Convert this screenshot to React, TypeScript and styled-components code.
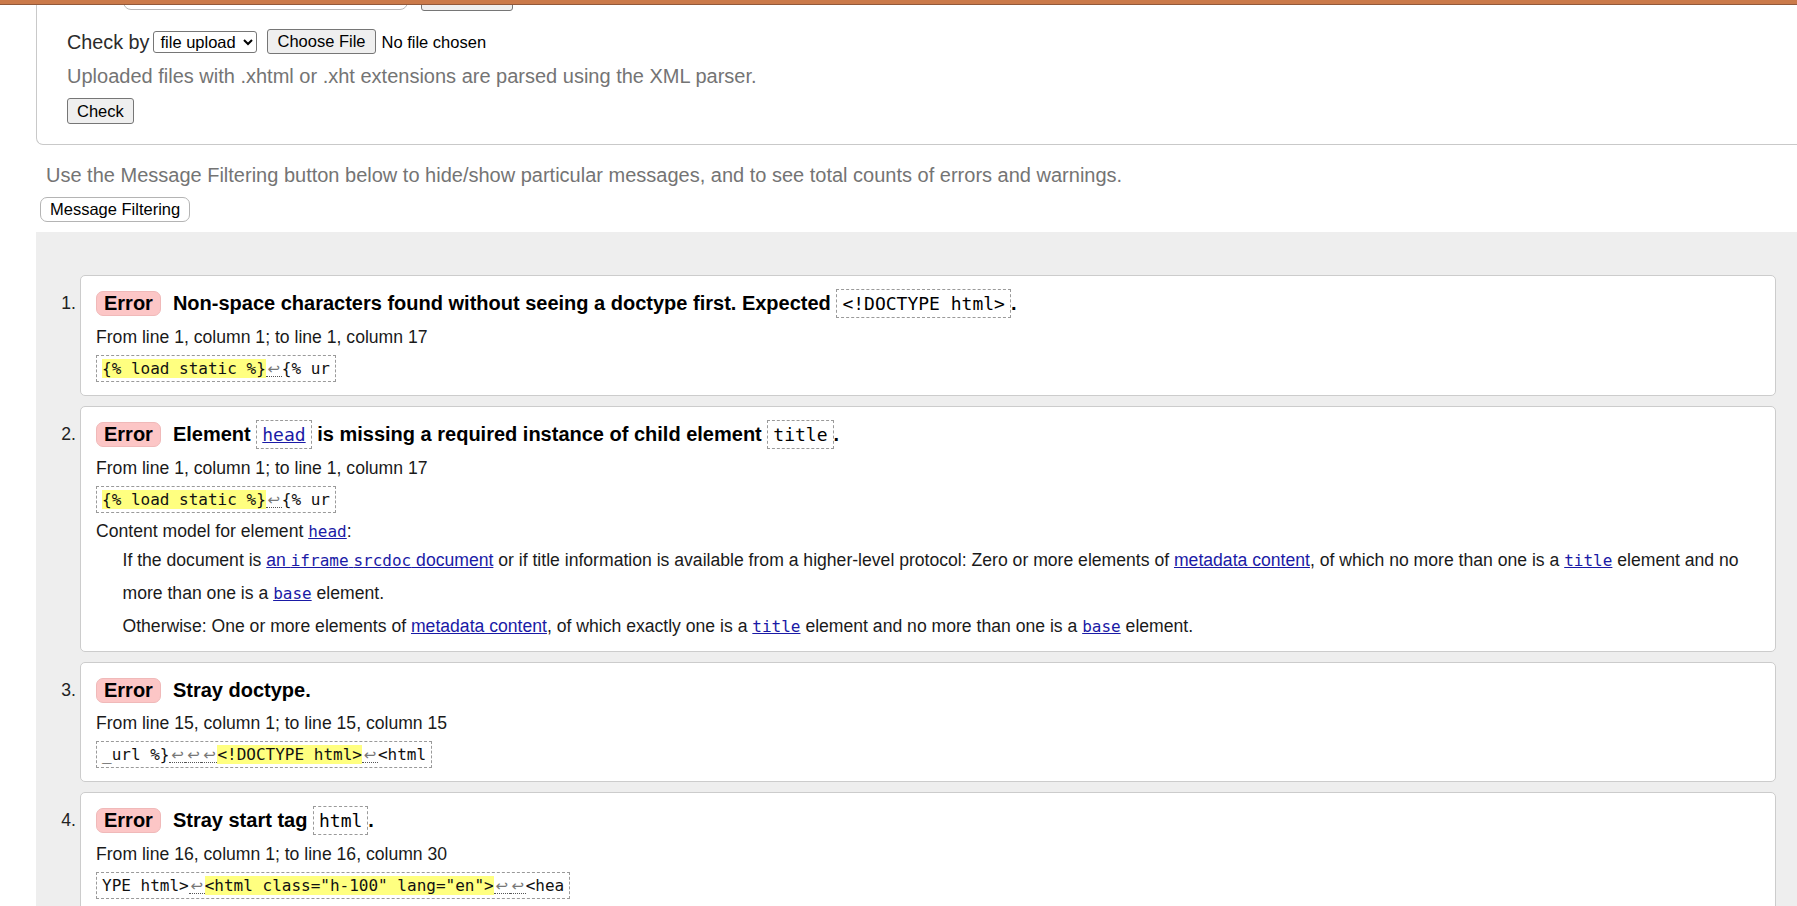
import React from "react";
import styled, { createGlobalStyle } from "styled-components";

const GlobalStyle = createGlobalStyle`
  *, *::before, *::after { box-sizing: border-box; }
  html { overflow: hidden; }
  body {
    margin: 0;
    background: #ffffff;
    color: #000;
    font-family: "Liberation Sans", Arial, sans-serif;
    font-size: 17.6px;
    line-height: 24px;
  }
`;

const Page = styled.div`
  display: flex;
  flex-direction: column;
  align-items: stretch;
`;

const HeaderEdge = styled.div`
  height: 5px;
  background: #cb7a4a;
  border-bottom: 1px solid #93593a;
`;

const InputPanel = styled.section`
  margin-left: 36px;
  border-left: 1px solid #c9c9c9;
  border-bottom: 1px solid #c9c9c9;
  border-bottom-left-radius: 7px;
  padding: 0 0 20px 30px;
  display: flex;
  flex-direction: column;
  align-items: flex-start;
`;

const ClippedRow = styled.div`
  height: 6px;
  overflow: hidden;
  display: flex;
  align-items: flex-end;
  gap: 13px;
  padding-left: 56px;
`;

const AddressField = styled.div`
  flex: none;
  width: 285px;
  height: 34px;
  margin-bottom: 1px;
  border: 1px solid #b9b9b9;
  border-radius: 8px;
`;

const CutButton = styled.div`
  flex: none;
  width: 92px;
  height: 34px;
  border: 1px solid #767676;
  border-radius: 3px;
  background: #efefef;
`;

const CheckByRow = styled.div`
  margin-top: 18px;
  height: 25px;
  display: flex;
  align-items: center;
`;

const CheckByLabel = styled.label`
  font-size: 19.8px;
  color: #2b2b2b;
  margin-right: 4px;
`;

const ModeSelect = styled.select`
  width: 104px;
  height: 22px;
  font-family: "Liberation Sans", Arial, sans-serif;
  font-size: 16.5px;
  color: #000;
  background: #fff;
  border: 1px solid #767676;
  border-radius: 3px;
  padding: 0 0 0 2px;
  margin: 0 10px 0 0;
`;

const FormButton = styled.button<{ $h: number; $top?: number }>`
  height: ${(p) => p.$h}px;
  margin-top: ${(p) => p.$top ?? 0}px;
  padding: 0 9px;
  font-family: "Liberation Sans", Arial, sans-serif;
  font-size: 16.5px;
  line-height: 1;
  color: #000;
  background: #efefef;
  border: 1px solid #767676;
  border-radius: 3px;
`;

const FileStatus = styled.span`
  margin-left: 6px;
  font-size: 16.5px;
  color: #000;
`;

const Hint = styled.p<{ $top: number; $left?: number }>`
  margin: ${(p) => p.$top}px 0 0 ${(p) => p.$left ?? 0}px;
  font-size: 20px;
  line-height: 24px;
  color: #747474;
`;

const FilterButton = styled.button`
  align-self: flex-start;
  margin: 10px 0 0 40px;
  height: 25px;
  padding: 0 9px;
  font-family: "Liberation Sans", Arial, sans-serif;
  font-size: 16.5px;
  line-height: 1;
  color: #000;
  background: #fff;
  border: 1px solid #b4b4b4;
  border-radius: 7px;
`;

const Results = styled.section`
  margin: 10px 0 0 36px;
  background: #eeeeee;
  padding: 43px 21px 40px 0;
`;

const MessageList = styled.ol`
  list-style: none;
  margin: 0;
  padding: 0;
  display: flex;
  flex-direction: column;
  gap: 10px;
`;

const MessageItem = styled.li`
  display: grid;
  grid-template-columns: 44px 1fr;
  align-items: start;
`;

const ItemNumber = styled.span`
  padding: 11px 4px 0 0;
  text-align: right;
  line-height: 34px;
  font-size: 17.6px;
  color: #222;
`;

const MessageCard = styled.div<{ $tail: number }>`
  background: #fff;
  border: 1px solid #cccccc;
  border-radius: 5px;
  padding: 10px 14px ${(p) => p.$tail}px 15px;
  display: flex;
  flex-direction: column;
  align-items: flex-start;
`;

const MessageTitle = styled.p`
  margin: 0;
  font-size: 20px;
  font-weight: bold;
  line-height: 34px;
`;

const SeverityBadge = styled.strong`
  display: inline-block;
  margin-right: 12px;
  padding: 0 7px;
  line-height: 23px;
  background: #fcc6c6;
  border: 1px solid #f0b9b9;
  border-radius: 7px;
`;

const TitleCode = styled.code`
  font-family: "DejaVu Sans Mono", monospace;
  font-size: 18px;
  font-weight: normal;
  padding: 3px 5px;
  border: 1px dashed #9a9a9a;
`;

const Location = styled.p`
  margin: 4px 0 0;
  line-height: 24px;
  color: #1a1a1a;
`;

const ExtractBox = styled.code`
  margin-top: 6px;
  padding: 3px 5px;
  border: 1px dashed #9a9a9a;
  font-family: "DejaVu Sans Mono", monospace;
  font-size: 16px;
  line-height: 19px;
  white-space: pre;
  color: #111;
`;

const Mark = styled.mark`
  background: #ffff80;
  color: inherit;
`;

const LineFeed = styled.span`
  display: inline-block;
  width: 16px;
  height: 15px;
  line-height: 15px;
  text-align: center;
  font-family: "DejaVu Sans", sans-serif;
  font-size: 15px;
  color: #777;
  border-bottom: 1px dotted #555;
`;

const ModelHeading = styled.p`
  margin: 6px 0 0;
  line-height: 24px;
  color: #1a1a1a;
`;

const ModelDetails = styled.div`
  align-self: stretch;
  padding-left: 26.5px;
  color: #1a1a1a;
`;

const ModelPara = styled.p`
  margin: 0;
  line-height: 32px;
`;

const DocLink = styled.a`
  color: #1a1aa6;
  text-decoration: underline;
`;

const InlineCode = styled.code`
  font-family: "DejaVu Sans Mono", monospace;
  font-size: 16px;
`;

type Segment = { kind: "text" | "mark" | "lf"; value?: string };

const t = (value: string): Segment => ({ kind: "text", value });
const m = (value: string): Segment => ({ kind: "mark", value });
const lf: Segment = { kind: "lf" };

const Extract = ({ parts }: { parts: Segment[] }) => (
  <ExtractBox>
    {parts.map((p, i) =>
      p.kind === "mark" ? (
        <Mark key={i}>{p.value}</Mark>
      ) : p.kind === "lf" ? (
        <LineFeed key={i}>↩</LineFeed>
      ) : (
        <React.Fragment key={i}>{p.value}</React.Fragment>
      )
    )}
  </ExtractBox>
);

const Message = ({
  n,
  title,
  location,
  extract,
  tail = 13,
  children,
}: {
  n: number;
  title: React.ReactNode;
  location: string;
  extract: Segment[];
  tail?: number;
  children?: React.ReactNode;
}) => (
  <MessageItem>
    <ItemNumber>{n}.</ItemNumber>
    <MessageCard $tail={tail}>
      <MessageTitle>
        <SeverityBadge>Error</SeverityBadge>
        {title}
      </MessageTitle>
      <Location>{location}</Location>
      <Extract parts={extract} />
      {children}
    </MessageCard>
  </MessageItem>
);

export default function App() {
  return (
    <Page>
      <GlobalStyle />
      <HeaderEdge />
      <InputPanel>
        <ClippedRow>
          <AddressField />
          <CutButton />
        </ClippedRow>
        <CheckByRow>
          <CheckByLabel>Check by</CheckByLabel>
          <ModeSelect defaultValue="file">
            <option value="address">address</option>
            <option value="file">file upload</option>
            <option value="text">text input</option>
          </ModeSelect>
          <FormButton type="button" $h={25}>
            Choose File
          </FormButton>
          <FileStatus>No file chosen</FileStatus>
        </CheckByRow>
        <Hint $top={10}>
          Uploaded files with .xhtml or .xht extensions are parsed using the XML parser.
        </Hint>
        <FormButton type="button" $h={26} $top={10}>
          Check
        </FormButton>
      </InputPanel>
      <Hint $top={18} $left={46}>
        Use the Message Filtering button below to hide/show particular messages, and to see total counts of errors and warnings.
      </Hint>
      <FilterButton type="button">Message Filtering</FilterButton>
      <Results>
        <MessageList>
          <Message
            n={1}
            title={
              <>
                Non-space characters found without seeing a doctype first. Expected{" "}
                <TitleCode>&lt;!DOCTYPE html&gt;</TitleCode>.
              </>
            }
            location="From line 1, column 1; to line 1, column 17"
            extract={[m("{% load static %}"), lf, t("{% ur")]}
          />
          <Message
            n={2}
            tail={8}
            title={
              <>
                Element{" "}
                <TitleCode>
                  <DocLink href="#">head</DocLink>
                </TitleCode>{" "}
                is missing a required instance of child element <TitleCode>title</TitleCode>.
              </>
            }
            location="From line 1, column 1; to line 1, column 17"
            extract={[m("{% load static %}"), lf, t("{% ur")]}
          >
            <ModelHeading>
              Content model for element{" "}
              <DocLink href="#">
                <InlineCode>head</InlineCode>
              </DocLink>
              :
            </ModelHeading>
            <ModelDetails>
              <ModelPara>
                If the document is{" "}
                <DocLink href="#">
                  an <InlineCode>iframe</InlineCode> <InlineCode>srcdoc</InlineCode> document
                </DocLink>{" "}
                or if title information is available from a higher-level protocol: Zero or more elements of{" "}
                <DocLink href="#">metadata content</DocLink>, of which no more than one is a{" "}
                <DocLink href="#">
                  <InlineCode>title</InlineCode>
                </DocLink>{" "}
                element and no more than one is a{" "}
                <DocLink href="#">
                  <InlineCode>base</InlineCode>
                </DocLink>{" "}
                element.
              </ModelPara>
              <ModelPara>
                Otherwise: One or more elements of <DocLink href="#">metadata content</DocLink>, of which exactly
                one is a{" "}
                <DocLink href="#">
                  <InlineCode>title</InlineCode>
                </DocLink>{" "}
                element and no more than one is a{" "}
                <DocLink href="#">
                  <InlineCode>base</InlineCode>
                </DocLink>{" "}
                element.
              </ModelPara>
            </ModelDetails>
          </Message>
          <Message
            n={3}
            title={<>Stray doctype.</>}
            location="From line 15, column 1; to line 15, column 15"
            extract={[t("_url %}"), lf, lf, lf, m("<!DOCTYPE html>"), lf, t("<html")]}
          />
          <Message
            n={4}
            title={
              <>
                Stray start tag <TitleCode>html</TitleCode>.
              </>
            }
            location="From line 16, column 1; to line 16, column 30"
            extract={[t("YPE html>"), lf, m('<html class="h-100" lang="en">'), lf, lf, t("<hea")]}
          />
        </MessageList>
      </Results>
    </Page>
  );
}
